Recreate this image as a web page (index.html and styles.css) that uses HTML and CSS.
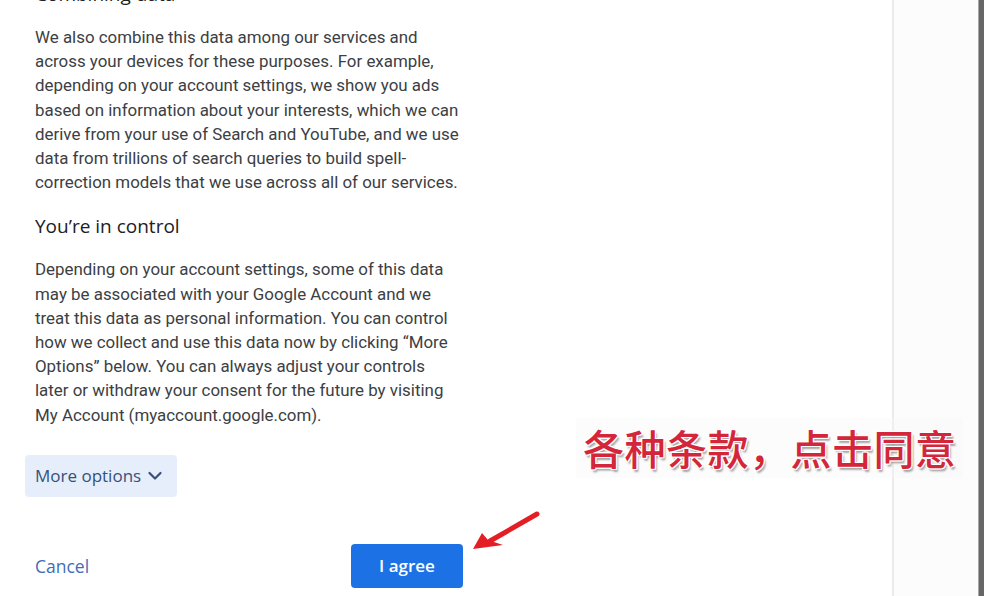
FILE: index.html
```html
<!DOCTYPE html>
<html lang="en">
<head>
<meta charset="utf-8">
<title>Privacy and Terms</title>
<link rel="stylesheet" href="styles.css">
</head>
<body>
<div class="window">
  <main class="main">
    <div class="column">
      <h2 class="heading">Combining data</h2>
      <p class="para">We also combine this data among our services and across your devices for these purposes. For example, depending on your account settings, we show you ads based on information about your interests, which we can derive from your use of Search and YouTube, and we use data from trillions of search queries to build spell-correction models that we use across all of our services.</p>
      <h2 class="heading">You’re in control</h2>
      <p class="para">Depending on your account settings, some of this data may be associated with your Google Account and we treat this data as personal information. You can control how we collect and use this data now by clicking “More Options” below. You can always adjust your controls later or withdraw your consent for the future by visiting My Account (myaccount.google.com).</p>
      <button class="more-btn" type="button">More options
        <svg class="chev" width="16" height="16" viewBox="0 0 16 16" aria-hidden="true"><path d="M2.5 5 L8 10.5 L13.5 5" fill="none" stroke="currentColor" stroke-width="2.2" stroke-linecap="round" stroke-linejoin="round"/></svg>
      </button>
      <div class="footer">
        <button class="cancel-btn" type="button">Cancel</button>
        <button class="agree-btn" type="button">I agree</button>
      </div>
    </div>
  </main>
  <div class="divider"></div>
  <aside class="side"></aside>
  <div class="scrollbar"></div>
</div>

<div class="note">各种条款，点击同意</div>
<svg class="arrow" width="984" height="596" viewBox="0 0 984 596" aria-hidden="true">
  <line x1="537" y1="514" x2="490" y2="541" stroke="#e41e25" stroke-width="5" stroke-linecap="round"/>
  <polygon points="473,549 482,533 488,540 503,545" fill="#e41e25"/>
</svg>
</body>
</html>
```

FILE: styles.css
```css
html, body {
  margin: 0;
  padding: 0;
  height: 100%;
  overflow: hidden;
  background: #ffffff;
}

.window {
  display: flex;
  height: 596px;
  width: 984px;
}

.main {
  width: 892px;
  flex: none;
  background: #ffffff;
  overflow: hidden;
}

.column {
  margin-top: -18px;
  margin-left: 25px;
  width: 438px;
  display: flex;
  flex-direction: column;
  align-items: flex-start;
  font-family: Roboto, "Liberation Sans", Arial, sans-serif;
}

.heading {
  margin: 20px 0 19px;
  padding-left: 10px;
  font-family: "Open Sans", Roboto, "Liberation Sans", sans-serif;
  font-size: 19px;
  line-height: 24px;
  font-weight: 520;
  color: #202124;
}

.heading:first-child {
  margin-top: 0;
}

.para {
  margin: 0;
  padding-left: 10px;
  width: 426px;
  font-size: 16.9px;
  line-height: 24.2px;
  color: #3c4043;
}

.more-btn {
  margin-top: 28px;
  display: flex;
  align-items: center;
  gap: 6px;
  height: 42px;
  padding: 0 14px 0 10px;
  border: none;
  border-radius: 4px;
  background: #e5eefa;
  color: #36507c;
  font-family: "Open Sans", Roboto, "Liberation Sans", sans-serif;
  font-size: 17px;
  font-weight: 500;
}

.chev {
  display: block;
  margin-top: 1px;
}

.footer {
  margin-top: 47px;
  width: 438px;
  display: flex;
  justify-content: space-between;
  align-items: center;
}

.cancel-btn {
  border: none;
  background: transparent;
  padding: 0 10px;
  color: #3f6db8;
  font-family: "Open Sans", Roboto, "Liberation Sans", sans-serif;
  font-size: 17.5px;
  font-weight: 500;
  height: 44px;
}

.agree-btn {
  width: 112px;
  height: 44px;
  border: none;
  border-radius: 4px;
  background: #1c72e4;
  color: #ffffff;
  font-family: "Open Sans", Roboto, "Liberation Sans", sans-serif;
  font-size: 17px;
  font-weight: 600;
}

.divider {
  width: 2px;
  flex: none;
  background: #ebebeb;
}

.side {
  flex: 1;
  background: #fcfcfc;
}

.scrollbar {
  width: 6px;
  flex: none;
  background: #666666;
  border-left: 1px solid #a8a8a8;
  box-sizing: border-box;
}

.note {
  position: absolute;
  left: 576px;
  top: 418px;
  padding: 6px 6px 8px 7px;
  background: rgba(246, 246, 246, 0.35);
  font-family: "Noto Sans CJK SC", "Noto Sans", sans-serif;
  font-size: 41px;
  line-height: 46px;
  font-weight: 500;
  color: #d4263a;
  letter-spacing: 0.5px;
  text-shadow:
    1px 0 0 #fff, -1px 0 0 #fff, 0 1px 0 #fff, 0 -1px 0 #fff,
    1px 1px 0 #fff, -1px -1px 0 #fff, 1px -1px 0 #fff, -1px 1px 0 #fff,
    2px 3px 2px rgba(0, 0, 0, 0.35);
}

.arrow {
  position: absolute;
  left: 0;
  top: 0;
  pointer-events: none;
}
```
